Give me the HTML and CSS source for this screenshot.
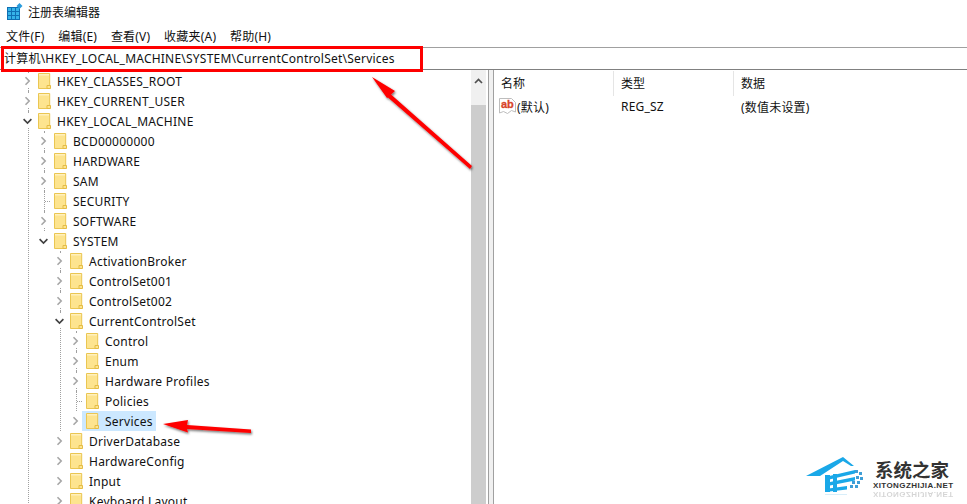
FILE: index.html
```html
<!DOCTYPE html>
<html lang="zh-CN">
<head>
  <meta charset="UTF-8" />
  <title>注册表编辑器</title>
  <link rel="stylesheet" href="styles.css">
</head>
<body>
  <svg class="defs" width="0" height="0">
    <symbol id="folder" viewBox="0 0 13 16">
      <path d="M.5.5h11.2v15H.5z" fill="#fde48f" stroke="#eac652"/>
      <path d="M1 1h10v1.500H1z" fill="#fff0bd"/>
      <path d="M9 15.500V12.500h3.500v3z" fill="#fde48f" stroke="#e5bc45"/>
    </symbol>
    <symbol id="closed" viewBox="0 0 9 9">
      <path d="M2.500.8l3.700 3.700-3.700 3.700" fill="none" stroke="#a6a6a6" stroke-width="1.600"/>
    </symbol>
    <symbol id="open" viewBox="0 0 9 9">
      <path d="M.6 2.600l3.900 3.900 3.900-3.900" fill="none" stroke="#404040" stroke-width="1.600"/>
    </symbol>
  </svg>

  <header class="titlebar">
    <svg class="app-icon" width="16" height="18" viewBox="0 0 16 18">
      <path d="M0 4h13v13H0z" fill="#0f6fb3"/>
      <path d="M1 5h3v3H1zM5 5h3v3H5zM9 5h3v3H9zM1 9h3v3H1zM5 9h3v3H5zM9 9h3v3H9zM1 13h3v3H1zM5 13h3v3H5zM9 13h3v3H9z" fill="#35b3e8"/>
      <path d="M12.500 0l3 3-3 3-3-3z" fill="#2a9bdc"/>
    </svg>
    <span>注册表编辑器</span>
  </header>

  <nav class="menubar">
    <a>文件(F)</a>
    <a>编辑(E)</a>
    <a>查看(V)</a>
    <a>收藏夹(A)</a>
    <a>帮助(H)</a>
  </nav>

  <div class="addressbar">计算机\HKEY_LOCAL_MACHINE\SYSTEM\CurrentControlSet\Services</div>

  <main class="panes">
    <section class="treepane">
      <ul class="tree">
        <li>
          <div class="row"><svg class="twisty"><use href="#closed"/></svg><span class="node"><svg class="folder"><use href="#folder"/></svg>HKEY_CLASSES_ROOT</span></div>
        </li>
        <li>
          <div class="row"><svg class="twisty"><use href="#closed"/></svg><span class="node"><svg class="folder"><use href="#folder"/></svg>HKEY_CURRENT_USER</span></div>
        </li>
        <li>
          <div class="row"><svg class="twisty"><use href="#open"/></svg><span class="node"><svg class="folder"><use href="#folder"/></svg>HKEY_LOCAL_MACHINE</span></div>
          <ul>
            <li><div class="row"><svg class="twisty"><use href="#closed"/></svg><span class="node"><svg class="folder"><use href="#folder"/></svg>BCD00000000</span></div></li>
            <li><div class="row"><svg class="twisty"><use href="#closed"/></svg><span class="node"><svg class="folder"><use href="#folder"/></svg>HARDWARE</span></div></li>
            <li><div class="row"><svg class="twisty"><use href="#closed"/></svg><span class="node"><svg class="folder"><use href="#folder"/></svg>SAM</span></div></li>
            <li><div class="row"><span class="leaf"></span><span class="node"><svg class="folder"><use href="#folder"/></svg>SECURITY</span></div></li>
            <li><div class="row"><svg class="twisty"><use href="#closed"/></svg><span class="node"><svg class="folder"><use href="#folder"/></svg>SOFTWARE</span></div></li>
            <li class="last">
              <div class="row"><svg class="twisty"><use href="#open"/></svg><span class="node"><svg class="folder"><use href="#folder"/></svg>SYSTEM</span></div>
              <ul>
                <li><div class="row"><svg class="twisty"><use href="#closed"/></svg><span class="node"><svg class="folder"><use href="#folder"/></svg>ActivationBroker</span></div></li>
                <li><div class="row"><svg class="twisty"><use href="#closed"/></svg><span class="node"><svg class="folder"><use href="#folder"/></svg>ControlSet001</span></div></li>
                <li><div class="row"><svg class="twisty"><use href="#closed"/></svg><span class="node"><svg class="folder"><use href="#folder"/></svg>ControlSet002</span></div></li>
                <li>
                  <div class="row"><svg class="twisty"><use href="#open"/></svg><span class="node"><svg class="folder"><use href="#folder"/></svg>CurrentControlSet</span></div>
                  <ul>
                    <li><div class="row"><svg class="twisty"><use href="#closed"/></svg><span class="node"><svg class="folder"><use href="#folder"/></svg>Control</span></div></li>
                    <li><div class="row"><svg class="twisty"><use href="#closed"/></svg><span class="node"><svg class="folder"><use href="#folder"/></svg>Enum</span></div></li>
                    <li><div class="row"><svg class="twisty"><use href="#closed"/></svg><span class="node"><svg class="folder"><use href="#folder"/></svg>Hardware Profiles</span></div></li>
                    <li><div class="row"><span class="leaf"></span><span class="node"><svg class="folder"><use href="#folder"/></svg>Policies</span></div></li>
                    <li class="last"><div class="row"><svg class="twisty"><use href="#closed"/></svg><span class="node selected"><svg class="folder"><use href="#folder"/></svg>Services</span></div></li>
                  </ul>
                </li>
                <li class="last"><div class="row"><svg class="twisty"><use href="#closed"/></svg><span class="node"><svg class="folder"><use href="#folder"/></svg>DriverDatabase</span></div></li>
                <li class="last"><div class="row"><svg class="twisty"><use href="#closed"/></svg><span class="node"><svg class="folder"><use href="#folder"/></svg>HardwareConfig</span></div></li>
                <li class="last"><div class="row"><svg class="twisty"><use href="#closed"/></svg><span class="node"><svg class="folder"><use href="#folder"/></svg>Input</span></div></li>
                <li class="last"><div class="row"><svg class="twisty"><use href="#closed"/></svg><span class="node"><svg class="folder"><use href="#folder"/></svg>Keyboard Layout</span></div></li>
              </ul>
            </li>
          </ul>
        </li>
      </ul>
    </section>

    <div class="scrollbar">
      <div class="scroll-up">
        <svg width="9" height="6" viewBox="0 0 9 6"><path d="M1 5l3.500-3.500L8 5" fill="none" stroke="#505050" stroke-width="1.700"/></svg>
      </div>
      <div class="scroll-thumb"></div>
    </div>
    <div class="splitter"></div>

    <section class="listpane">
      <div class="list-head">
        <span class="col">名称</span>
        <span class="col">类型</span>
        <span class="col head-end">数据</span>
      </div>
      <div class="list-row">
        <span class="col name-cell">
          <svg class="ab-icon" width="17" height="17" viewBox="0 0 17 17">
            <path d="M.5.500h12l4 4v9.500l-4-1.500-4 3-4-2-4 1.500z" fill="#fff" stroke="#bdbdbd"/>
            <text x="2" y="10" class="ab-text">ab</text>
          </svg>(默认)
        </span>
        <span class="col">REG_SZ</span>
        <span class="col">(数值未设置)</span>
      </div>
    </section>
  </main>

  <!-- annotations drawn on top of the screenshot -->
  <div class="redbox"></div>
  <svg class="arrows" width="967" height="504" viewBox="0 0 967 504">
    <defs>
      <filter id="shadow" x="-20%" y="-20%" width="150%" height="150%">
        <feDropShadow dx="1" dy="1.500" stdDeviation="1.200" flood-color="#000" flood-opacity=".55"/>
      </filter>
    </defs>
    <g fill="#fe0000" filter="url(#shadow)">
      <path d="M372 77L395 91 391 94.500 472 166 470 169 388 97.500 387 98z"/>
      <path d="M163 424L188 420 187 425 251 429.500V433L187 429 188 432.500z"/>
    </g>
  </svg>

  <div class="watermark">
    <svg width="64" height="50" viewBox="0 0 64 50">
      <path d="M6 26L43 7l11 9h-3l-8-5-23 15z" fill="#1aa8e8"/>
      <path d="M25 25h5v17h-5zM33 24h4v18h-4z" fill="#1aa8e8"/>
      <path d="M25 27l30-7v3.500L25 30.500zM25 33l30-6v3.500L25 36.500zM25 39l22-3v3.500L25 42z" fill="#1aa8e8"/>
      <path d="M55 20h3v3h-3zM59 22h3v3h-3zM56 26h3v3h-3zM60 27h3v3h-3zM52 31h3v3h-3zM57 31h3v3h-3zM50 35h3v3h-3zM55 35h3v3h-3z" fill="#3f9ed6"/>
      <path d="M25 44h22v1H25z" fill="#d8eefa"/>
    </svg>
    <div class="brand">
      <span class="brand-cn">系统之家</span>
      <span class="brand-en">XITONGZHIJIA.NET</span>
      <span class="brand-en mirror" aria-hidden="true">XITONGZHIJIA.NET</span>
    </div>
  </div>
</body>
</html>
```

FILE: styles.css
```css
body {
  font-family: "Noto Sans", "Noto Sans CJK SC", sans-serif;
  font-size: 12px;
  margin: 0;
  height: 504px;
  overflow: hidden;
  background: #ffffff;
  color: #111111;
  position: relative;
}
.defs {
  display: block;
}
.titlebar {
  height: 24px;
  display: flex;
  align-items: center;
  padding-left: 7px;
  gap: 5px;
}
.app-icon {
  flex: none;
}
.menubar {
  height: 23px;
  display: flex;
  align-items: center;
  padding-left: 6px;
  gap: 13.8px;
  letter-spacing: .2px;
}
.addressbar {
  height: 21px;
  line-height: 21px;
  padding-left: 4px;
  letter-spacing: .22px;
  border-top: 1px solid #a0a0a0;
  border-bottom: 1px solid #808080;
}

.panes {
  display: flex;
  height: 434px;
}
.treepane {
  width: 471px;
  flex: none;
  overflow: hidden;
  padding-top: 1px;
  letter-spacing: .25px;
}
.tree, .tree ul {
  list-style: none;
  margin: 0;
  padding: 0;
}
.tree {
  margin-left: 28px;
}
.tree ul {
  margin-left: 15px;
}
.tree li {
  border-left: 1px dotted #a0a0a0;
}
.tree li.last {
  border-left-color: transparent;
}
.row {
  height: 20px;
  display: flex;
  align-items: center;
}
.twisty {
  width: 9px;
  height: 14px;
  flex: none;
  margin-left: -6px;
  margin-right: 2px;
  background: #ffffff;
}
.leaf {
  width: 5px;
  height: 10px;
  flex: none;
  align-self: flex-start;
  border-bottom: 1px dotted #a0a0a0;
}
.node {
  height: 20px;
  display: flex;
  align-items: center;
  padding: 0 3px 0 4px;
  white-space: nowrap;
}
.node.selected {
  background: #cce8ff;
}
.folder {
  width: 13px;
  height: 16px;
  flex: none;
  margin-right: 6px;
}

.scrollbar {
  width: 15px;
  flex: none;
  display: flex;
  flex-direction: column;
  background: #f0f0f0;
}
.scroll-up {
  height: 21px;
  display: flex;
  align-items: center;
  justify-content: center;
  padding-bottom: 1px;
}
.scroll-thumb {
  flex: 1;
  margin-top: 13px;
  background: #cdcdcd;
}
.splitter {
  width: 4px;
  flex: none;
  margin-left: 2px;
  background: #f0f0f0;
  border-left: 1px solid #a0a0a0;
  border-right: 1px solid #a0a0a0;
}

.listpane {
  flex: 1;
  padding-top: 1px;
}
.list-head, .list-row {
  display: flex;
}
.list-head {
  height: 25px;
  align-items: center;
}
.list-head .col {
  height: 25px;
  line-height: 25px;
  border-right: 1px solid #e5e5e5;
}
.list-head .head-end {
  border-right: none;
}
.list-row {
  height: 21px;
  align-items: center;
  letter-spacing: .2px;
}
.col {
  width: 113px;
  padding-left: 7px;
  flex: none;
  box-sizing: content-box;
}
.list-head .col {
  width: 112px;
}
.name-cell {
  display: flex;
  align-items: center;
  padding-left: 5px;
  width: 115px;
}
.ab-icon {
  margin-right: 1px;
  flex: none;
}
.ab-text {
  font-family: "Liberation Sans", sans-serif;
  font-size: 11px;
  font-weight: 700;
  fill: #d8452a;
  stroke: #d8452a;
  stroke-width: .3px;
  letter-spacing: 0;
}

.redbox {
  position: absolute;
  left: 1px;
  top: 46px;
  width: 416px;
  height: 20px;
  border: 3px solid #fe0000;
}
.arrows {
  position: absolute;
  left: 0;
  top: 0;
}
.watermark {
  position: absolute;
  left: 800px;
  top: 450px;
  display: flex;
}
.brand {
  margin-left: 9px;
  margin-top: 7px;
  display: flex;
  flex-direction: column;
  color: #333333;
}
.brand-cn {
  font-family: "Noto Sans CJK SC", sans-serif;
  font-size: 18.5px;
  line-height: 24px;
  font-weight: 700;
  padding-left: 2px;
  white-space: nowrap;
}
.brand-en {
  font-family: "Liberation Sans", sans-serif;
  font-size: 8px;
  line-height: 9px;
  font-weight: 700;
  letter-spacing: .4px;
  white-space: nowrap;
}
.mirror {
  transform: scaleY(-1);
  opacity: .2;
}
```
